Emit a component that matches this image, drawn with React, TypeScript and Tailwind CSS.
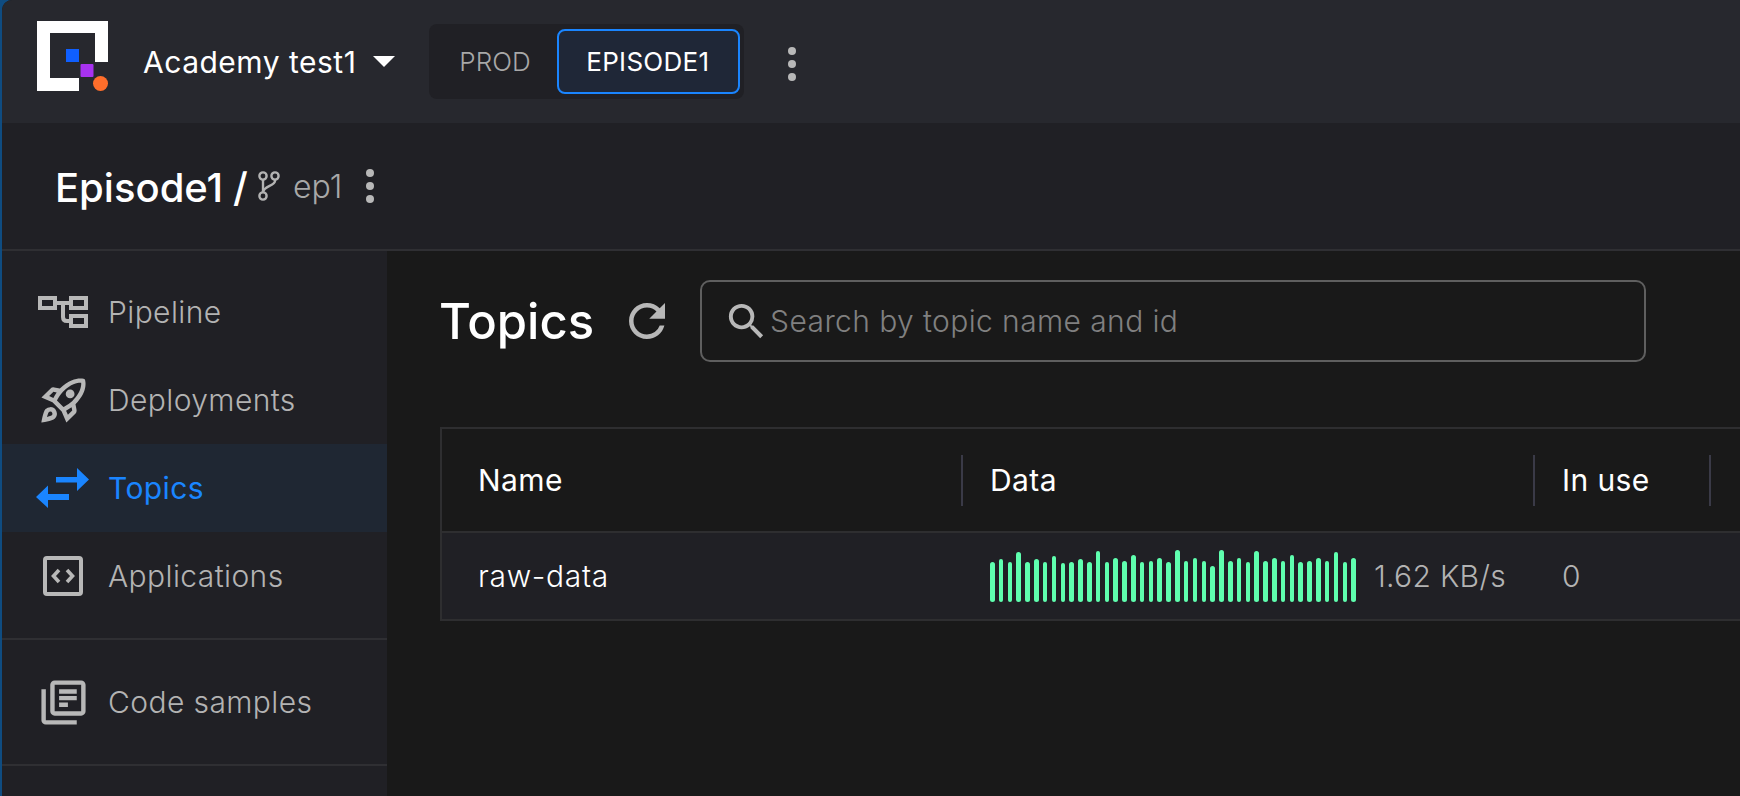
import React from 'react';
import { MdRefresh, MdSearch, MdOutlineRocketLaunch, MdOutlineLibraryBooks } from 'react-icons/md';

const Kebab = () => (
  <div className="flex flex-col gap-[5px]">
    <span className="w-2 h-2 rounded-full bg-[#b8b8b8]" />
    <span className="w-2 h-2 rounded-full bg-[#b8b8b8]" />
    <span className="w-2 h-2 rounded-full bg-[#b8b8b8]" />
  </div>
);

const Logo = () => (
  <svg width="72" height="70" viewBox="0 0 72 70" className="shrink-0 mb-[11px]">
    <path d="M0 0H71V41H58V12H13V57H42V70H0Z" fill="#fff" />
    <rect x="29" y="28" width="13" height="13" fill="#0f5fff" />
    <rect x="43.5" y="43" width="13" height="13" rx="1" fill="#a832f0" />
    <circle cx="63.5" cy="62.5" r="7.5" fill="#ff6e2b" />
  </svg>
);

const BranchIcon = () => (
  <svg width="22" height="30" viewBox="0 0 22 30" fill="none" stroke="#b3b3b3" strokeWidth="2.4">
    <circle cx="5" cy="5" r="3.6" />
    <circle cx="17" cy="5" r="3.6" />
    <circle cx="5" cy="25" r="3.6" />
    <path d="M5 8.5V21.5" />
    <path d="M17 8.5V10C17 15 5 15 5 21.5" />
  </svg>
);

const PipelineIcon = () => (
  <svg width="50" height="32" viewBox="0 0 50 32" fill="none" stroke="#b8b8b8" strokeWidth="4">
    <rect x="2" y="2" width="15" height="10" />
    <rect x="33" y="2" width="15" height="10" />
    <rect x="33" y="20" width="15" height="10" />
    <path d="M17 7H33" />
    <path d="M25 7V21C25 24 27 25 29 25H33" />
  </svg>
);

const TopicsIcon = () => (
  <svg width="54" height="40" viewBox="0 0 54 40" fill="#1a85ff">
    <path d="M20 9H41V0L53 11.5L41 23V14.5H20Z" />
    <path d="M33 26H12V17.5L0 29L12 40V32H33Z" />
  </svg>
);

const ApplicationsIcon = () => (
  <svg width="40" height="40" viewBox="0 0 40 40" fill="none" stroke="#b8b8b8">
    <rect x="2" y="2" width="36" height="36" rx="2" strokeWidth="4" />
    <path d="M16 14L10.5 20L16 26" strokeWidth="3.6" />
    <path d="M24 14L29.5 20L24 26" strokeWidth="3.6" />
  </svg>
);

const bars = [
  40, 43, 40, 50, 40, 43, 40, 46, 39, 40, 43, 40, 51, 40, 44, 41, 47, 40, 41, 44, 40,
  52, 41, 44, 41, 36, 52, 41, 44, 40, 51, 41, 44, 41, 47, 40, 41, 44, 41, 50, 40, 44,
];

const NavItem = ({ icon, label, active }: { icon: React.ReactNode; label: string; active?: boolean }) => (
  <div className={`flex items-center h-[88px] ${active ? 'bg-[#1f2733] text-[#1a85ff]' : 'text-[#b3b3b3]'}`}>
    <div className="w-[106px] flex items-center justify-center pl-[16px] shrink-0">{icon}</div>
    <span className={`text-[30px] tracking-[0.4px] ${active ? 'font-normal' : 'font-light'}`}>{label}</span>
  </div>
);

const HeadCell = ({ label, pad }: { label: string; pad: string }) => (
  <div className="flex items-center">
    <div className={`h-[51px] flex items-center border-l-2 border-[#3a3a47] ${pad}`}>{label}</div>
  </div>
);

export default function App() {
  return (
    <div className="w-[1740px] h-[796px] overflow-hidden bg-[#0f4c81] pl-[2px] font-['Inter',sans-serif]">
      <div className="h-full rounded-tl-[10px] overflow-hidden flex flex-col bg-[#191919]">
        {/* top bar */}
        <div className="h-[123px] shrink-0 bg-[#27282e] flex items-center pl-[35px] text-white">
          <Logo />
          <span className="ml-[34px] mt-[2px] text-[30px] tracking-[0.5px]">Academy test1</span>
          <span className="ml-[17px] w-0 h-0 border-x-[11px] border-x-transparent border-t-[11px] border-t-white" />
          <div className="ml-[34px] w-[315px] h-[75px] rounded-lg bg-[#202025] flex items-center pl-[30px] pr-[4px]">
            <span className="text-[26px] font-light text-[#a8a8a8]">PROD</span>
            <div className="ml-auto w-[183px] h-[65px] rounded-lg border-2 border-[#1a85ff] bg-[#1f2737] flex items-center justify-center pr-[2px] text-[26px] tracking-[0.3px]">
              EPISODE1
            </div>
          </div>
          <div className="ml-[44px] mt-[4px]"><Kebab /></div>
        </div>

        {/* project header */}
        <div className="h-[128px] shrink-0 bg-[#202025] border-b-2 border-[#2f2f33] flex items-center pl-[53px] text-white">
          <span className="mt-[3px] text-[40px] font-medium">Episode1</span>
          <span className="mt-[3px] ml-[10px] text-[40px] font-medium">/</span>
          <div className="ml-[10px]"><BranchIcon /></div>
          <span className="mt-[1px] ml-[13px] text-[32px] font-light text-[#a8a8a8]">ep1</span>
          <div className="ml-[24px]"><Kebab /></div>
        </div>

        <div className="flex-1 flex min-h-0">
          {/* sidebar */}
          <div className="w-[385px] shrink-0 bg-[#202025]">
            <div className="pt-[17px] pb-[18px] border-b-2 border-[#2f2f33]">
              <NavItem icon={<PipelineIcon />} label="Pipeline" />
              <NavItem icon={<MdOutlineRocketLaunch size={53} className="text-[#b8b8b8]" />} label="Deployments" />
              <NavItem icon={<TopicsIcon />} label="Topics" active />
              <NavItem icon={<ApplicationsIcon />} label="Applications" />
            </div>
            <div className="py-[18px] border-b-2 border-[#2f2f33]">
              <NavItem icon={<MdOutlineLibraryBooks size={53} className="text-[#b8b8b8]" />} label="Code samples" />
            </div>
          </div>

          {/* main */}
          <div className="flex-1 min-w-0 pl-[52px] pt-[29px]">
            <div className="flex items-center h-[82px]">
              <h1 className="mt-[2px] text-[49px] font-medium text-white">Topics</h1>
              <MdRefresh size={54} className="ml-[26px] text-[#b8b8b8]" />
              <div className="ml-[26px] w-[946px] h-[82px] rounded-[10px] border-2 border-[#5f5f5f] flex items-center pl-[21px]">
                <MdSearch size={47} className="text-[#b8b8b8]" />
                <span className="text-[30px] font-light text-[#808080] tracking-[0.4px]">Search by topic name and id</span>
              </div>
            </div>

            <div className="mt-[65px] ml-[1px] border-y-2 border-l-2 border-[#2e2e30] text-[30px] tracking-[0.4px]">
              <div className="grid grid-cols-[519px_572px_176px_1fr] h-[104px] border-b-2 border-[#2e2e30] text-white">
                <div className="flex items-center pl-[36px]">Name</div>
                <HeadCell label="Data" pad="pl-[27px]" />
                <HeadCell label="In use" pad="pl-[27px]" />
                <HeadCell label="" pad="" />
              </div>
              <div className="grid grid-cols-[519px_572px_176px_1fr] h-[86px] bg-[#202025] font-light items-center">
                <div className="pl-[36px] text-white tracking-[0.7px]">raw-data</div>
                <div className="flex items-center pl-[29px]">
                  <div className="w-[366px] h-[52px] flex items-end justify-between shrink-0">
                    {bars.map((h, i) => (
                      <span key={i} className="w-[4.6px] rounded-full bg-[#5fffaf]" style={{ height: h }} />
                    ))}
                  </div>
                  <span className="ml-[18px] text-[#b3b3b3] whitespace-nowrap tracking-[0.3px]">1.62 KB/s</span>
                </div>
                <div className="pl-[29px] text-[#b3b3b3]">0</div>
              </div>
            </div>
          </div>
        </div>
      </div>
    </div>
  );
}
